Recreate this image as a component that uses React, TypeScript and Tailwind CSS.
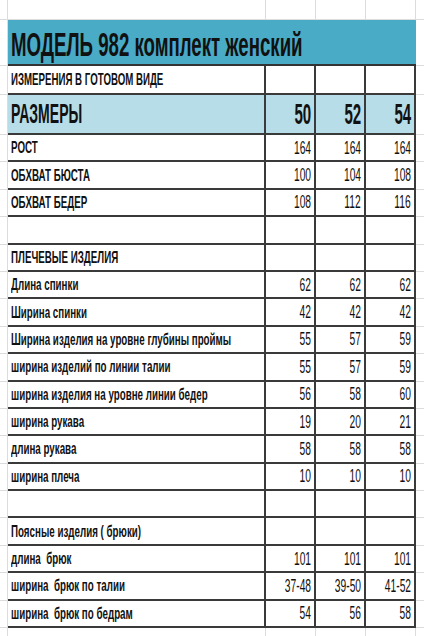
const rows: { label: string; v?: string[] }[] = [
  { label: "РОСТ", v: ["164", "164", "164"] },
  { label: "ОБХВАТ БЮСТА", v: ["100", "104", "108"] },
  { label: "ОБХВАТ БЕДЕР", v: ["108", "112", "116"] },
  { label: "" },
  { label: "ПЛЕЧЕВЫЕ ИЗДЕЛИЯ" },
  { label: "Длина спинки", v: ["62", "62", "62"] },
  { label: "Ширина спинки", v: ["42", "42", "42"] },
  { label: "Ширина изделия на уровне глубины проймы", v: ["55", "57", "59"] },
  { label: "ширина изделий по линии талии", v: ["55", "57", "59"] },
  { label: "ширина изделия на уровне линии бедер", v: ["56", "58", "60"] },
  { label: "ширина рукава", v: ["19", "20", "21"] },
  { label: "длина рукава", v: ["58", "58", "58"] },
  { label: "ширина плеча", v: ["10", "10", "10"] },
  { label: "" },
  { label: "Поясные изделия ( брюки)" },
  { label: "длина  брюк", v: ["101", "101", "101"] },
  { label: "ширина  брюк по талии", v: ["37-48", "39-50", "41-52"] },
  { label: "ширина  брюк по бедрам", v: ["54", "56", "58"] },
];

function FaintRow({ h }: { h: string }) {
  return (
    <div className={`flex ${h}`}>
      <div className="w-[8px] shrink-0 border-r border-b border-[#dcdcdc]" />
      <div className="w-[258px] shrink-0 border-r border-b border-[#dcdcdc]" />
      <div className="w-[50px] shrink-0 border-r border-b border-[#dcdcdc]" />
      <div className="w-[50px] shrink-0 border-r border-b border-[#dcdcdc]" />
      <div className="w-[50px] shrink-0 border-r border-b border-[#dcdcdc]" />
      <div className="flex-1 border-b border-[#dcdcdc]" />
    </div>
  );
}

export default function App() {
  return (
    <div className="w-[424px] h-[636px] overflow-hidden bg-white text-[#111] font-['Liberation_Sans',Arial,sans-serif]">
      <FaintRow h="h-[20px]" />

      {/* title */}
      <div className="flex h-[46px]">
        <div className="w-[8px] shrink-0 border-r border-b border-[#dcdcdc]" />
        <div className="w-[408px] shrink-0 bg-[#4aabc6] border-b-2 border-[#333] flex items-center pt-[4px] pl-[3px]">
          <span className="inline-block origin-left scale-x-[0.565] whitespace-pre font-bold text-[33px] leading-none">
            МОДЕЛЬ 982 комплект женский
          </span>
        </div>
        <div className="flex-1 border-b border-[#dcdcdc]" />
      </div>

      {/* subtitle */}
      <div className="flex h-[29px]">
        <div className="w-[8px] shrink-0 border-r border-b border-[#dcdcdc]" />
        <div className="w-[258px] shrink-0 border-r-2 border-b-2 border-[#3a3a3a] flex items-center pl-[3px]">
          <span className="inline-block origin-left scale-x-[0.57] whitespace-pre font-bold text-[17px] leading-none">
            ИЗМЕРЕНИЯ В ГОТОВОМ ВИДЕ
          </span>
        </div>
        <div className="w-[50px] shrink-0 border-r-2 border-b-2 border-[#3a3a3a]" />
        <div className="w-[50px] shrink-0 border-r-2 border-b-2 border-[#3a3a3a]" />
        <div className="w-[50px] shrink-0 border-r-2 border-b-2 border-[#3a3a3a]" />
        <div className="flex-1 border-b border-[#dcdcdc]" />
      </div>

      {/* sizes */}
      <div className="flex h-[40px]">
        <div className="w-[8px] shrink-0 border-r border-b border-[#dcdcdc]" />
        <div className="w-[258px] shrink-0 bg-[#b7dde8] border-r-2 border-b-2 border-[#3a3a3a] flex items-center pl-[3px]">
          <span className="inline-block origin-left scale-x-[0.52] whitespace-pre font-bold text-[27px] leading-none">
            РАЗМЕРЫ
          </span>
        </div>
        {["50", "52", "54"].map((s) => (
          <div key={s} className="w-[50px] shrink-0 bg-[#b7dde8] border-r-2 border-b-2 border-[#3a3a3a] flex items-center justify-end pr-[3px]">
            <span className="inline-block origin-right scale-x-[0.52] font-bold text-[29px] leading-none">{s}</span>
          </div>
        ))}
        <div className="flex-1 border-b border-[#dcdcdc]" />
      </div>

      {rows.map((r, i) => (
        <div key={i} className="flex h-[27.4px]">
          <div className="w-[8px] shrink-0 border-r border-b border-[#dcdcdc]" />
          <div className="w-[258px] shrink-0 border-r-2 border-b-2 border-[#3a3a3a] flex items-center pl-[3px]">
            <span className="inline-block origin-left scale-x-[0.575] whitespace-pre font-bold text-[17px] leading-none">
              {r.label}
            </span>
          </div>
          {[0, 1, 2].map((j) => (
            <div key={j} className="w-[50px] shrink-0 border-r-2 border-b-2 border-[#3a3a3a] flex items-center justify-end pr-[3px]">
              <span className="inline-block origin-right scale-x-[0.57] whitespace-nowrap text-[18px] leading-none">
                {r.v ? r.v[j] : ""}
              </span>
            </div>
          ))}
          <div className="flex-1 border-b border-[#dcdcdc]" />
        </div>
      ))}

      <FaintRow h="h-[10px]" />
    </div>
  );
}
